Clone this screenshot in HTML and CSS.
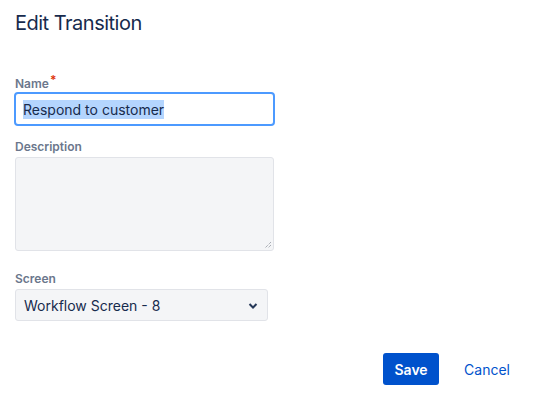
FILE: index.html
```html
<!DOCTYPE html>
<html>
<head>
<meta charset="utf-8">
<link rel="stylesheet" href="styles.css">
</head>
<body>
<div class="dialog">
  <h1 class="title">Edit Transition</h1>
  <form class="form">
    <div class="field field-name">
      <label class="label">Name<span class="req">*</span></label>
      <div class="input focused"><span class="sel">Respond to customer</span></div>
    </div>
    <div class="field field-desc">
      <label class="label">Description</label>
      <div class="textarea">
        <svg class="grip" width="8" height="8" viewBox="0 0 8 8"><path d="M7 1 L1 7 M7 4 L4 7" stroke="#8a8f99" stroke-width="1" stroke-dasharray="1 1" fill="none"/></svg>
      </div>
    </div>
    <div class="field field-screen">
      <label class="label">Screen</label>
      <div class="select">
        <span>Workflow Screen - 8</span>
        <svg class="chev" width="10" height="8" viewBox="0 0 10 8"><path d="M1.5 2 L5 5.5 L8.5 2" stroke="#253858" stroke-width="2" fill="none"/></svg>
      </div>
    </div>
  </form>
  <div class="actions">
    <button class="btn primary">Save</button>
    <button class="btn link">Cancel</button>
  </div>
</div>
</body>
</html>
```
FILE: styles.css
```css
* { box-sizing: border-box; }
body {
  margin: 0;
  font-family: Inter, "Noto Sans", sans-serif;
  color: #172B4D;
  background: #fff;
}
.dialog {
  padding: 11px 0 0 15px;
  width: 535px;
}
.title {
  margin: 0;
  font-size: 20px;
  line-height: 24px;
  font-weight: 400;
  letter-spacing: -0.5px;
}
.form {
  display: flex;
  flex-direction: column;
}
.field { display: flex; flex-direction: column; }
.field-name { margin-top: 37px; }
.field-desc { margin-top: 13px; }
.field-screen { margin-top: 20px; }
.label {
  font-size: 12px;
  line-height: 16px;
  font-weight: 600;
  color: #6B778C;
  height: 16px;
  margin-bottom: 2px;
}
.field-name .label { margin-bottom: 4px; }
.req { color: #DE350B; font-size: 12px; vertical-align: 4px; margin-left: 1px; }
.input {
  margin-left: -1px;
  width: 261px;
  height: 34px;
  border: 2px solid #4C9AFF;
  border-radius: 4px;
  background: #fff;
  display: flex;
  align-items: center;
  padding-left: 7px;
  font-size: 14px;
}
.sel { background: #B4D5FE; line-height: 19px; color: #172B4D; }
.textarea {
  width: 259px;
  height: 94px;
  border: 1.5px solid #E1E3E8;
  border-radius: 3px;
  background: #F4F5F7;
  position: relative;
}
.grip { position: absolute; right: 1px; bottom: 1px; }
.select {
  width: 253px;
  height: 32px;
  border: 1px solid #E1E3E8;
  border-radius: 3px;
  background: #F4F5F7;
  display: flex;
  align-items: center;
  justify-content: space-between;
  padding: 0 9px 0 8px;
  font-size: 14px;
  color: #172B4D;
}
.chev { margin-top: 1px; }
.actions {
  display: flex;
  justify-content: flex-end;
  margin-top: 32px;
  padding-right: 13px;
  gap: 13px;
}
.btn {
  font-family: inherit;
  font-size: 14px;
  height: 32px;
  border: none;
  border-radius: 3px;
  cursor: pointer;
}
.primary {
  width: 56px;
  background: #0052CC;
  color: #fff;
  font-weight: 600;
}
.link {
  background: transparent;
  color: #0052CC;
  padding: 0 12px;
}
```
